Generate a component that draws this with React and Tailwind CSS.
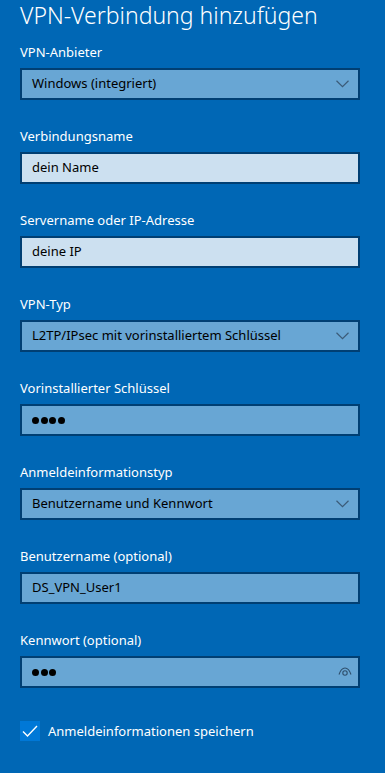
const fieldBase =
  "flex h-[32px] items-center border-2 border-[#003f73] px-[10px] text-[13px] text-black";

function Chevron() {
  return (
    <svg width="13" height="8" viewBox="0 0 13 8" className="ml-auto mr-[-1px]" fill="none">
      <path d="M0.5 0.8 L6.5 6.6 L12.5 0.8" stroke="#3b5b78" strokeWidth="1.2" />
    </svg>
  );
}

function Eye() {
  return (
    <svg width="14" height="9" viewBox="0 0 14 9" className="ml-auto mr-[-4px] mt-[-2px]" fill="none">
      <path d="M1 7.5 C2.5 3 5 1 7 1 C9 1 11.5 3 13 7.5" stroke="#2f4f6c" strokeWidth="1.1" />
      <circle cx="7" cy="6" r="2.2" stroke="#2f4f6c" strokeWidth="1.1" />
    </svg>
  );
}

function Dots({ n }) {
  return (
    <div className="flex gap-[1.5px]">
      {Array.from({ length: n }).map((_, i) => (
        <span key={i} className="h-[7px] w-[7px] rounded-full bg-black" />
      ))}
    </div>
  );
}

function Field({ label, kind, value, dots, eye }) {
  const fill = kind === "text" ? "bg-[#cce0f0]" : "bg-[#68a6d4]";
  return (
    <div className="flex flex-col">
      <label className="h-[20px] text-[13px] leading-[20px] text-white">{label}</label>
      <div className={`mt-[6px] ${fieldBase} ${fill}`}>
        {dots ? <Dots n={dots} /> : <span>{value}</span>}
        {kind === "select" && <Chevron />}
        {eye && <Eye />}
      </div>
    </div>
  );
}

export default function App() {
  return (
    <div
      className="h-[773px] w-[385px] overflow-hidden bg-[#0067b5] pl-[20px] pr-[25px]"
      style={{ fontFamily: '"Noto Sans", "Open Sans", sans-serif' }}
    >
      <h1 className="h-[42px] text-[23px] font-light leading-[30px] text-white">
        VPN-Verbindung hinzufügen
      </h1>
      <div className="flex flex-col gap-[26px]">
        <Field label="VPN-Anbieter" kind="select" value="Windows (integriert)" />
        <Field label="Verbindungsname" kind="text" value="dein Name" />
        <Field label="Servername oder IP-Adresse" kind="text" value="deine IP" />
        <Field label="VPN-Typ" kind="select" value="L2TP/IPsec mit vorinstalliertem Schlüssel" />
        <Field label="Vorinstallierter Schlüssel" kind="pw" dots={4} />
        <Field label="Anmeldeinformationstyp" kind="select" value="Benutzername und Kennwort" />
        <Field label="Benutzername (optional)" kind="pw" value="DS_VPN_User1" />
        <Field label="Kennwort (optional)" kind="pw" dots={3} eye />
      </div>
      <div className="mt-[33px] flex items-center gap-[8px]">
        <div className="flex h-[20px] w-[20px] items-center justify-center bg-[#0078d7]">
          <svg width="16" height="12" viewBox="0 0 16 12" fill="none">
            <path d="M1 6.5 L5.5 11 L15 1" stroke="white" strokeWidth="1.4" />
          </svg>
        </div>
        <span className="text-[13px] leading-[20px] text-white">Anmeldeinformationen speichern</span>
      </div>
    </div>
  );
}
